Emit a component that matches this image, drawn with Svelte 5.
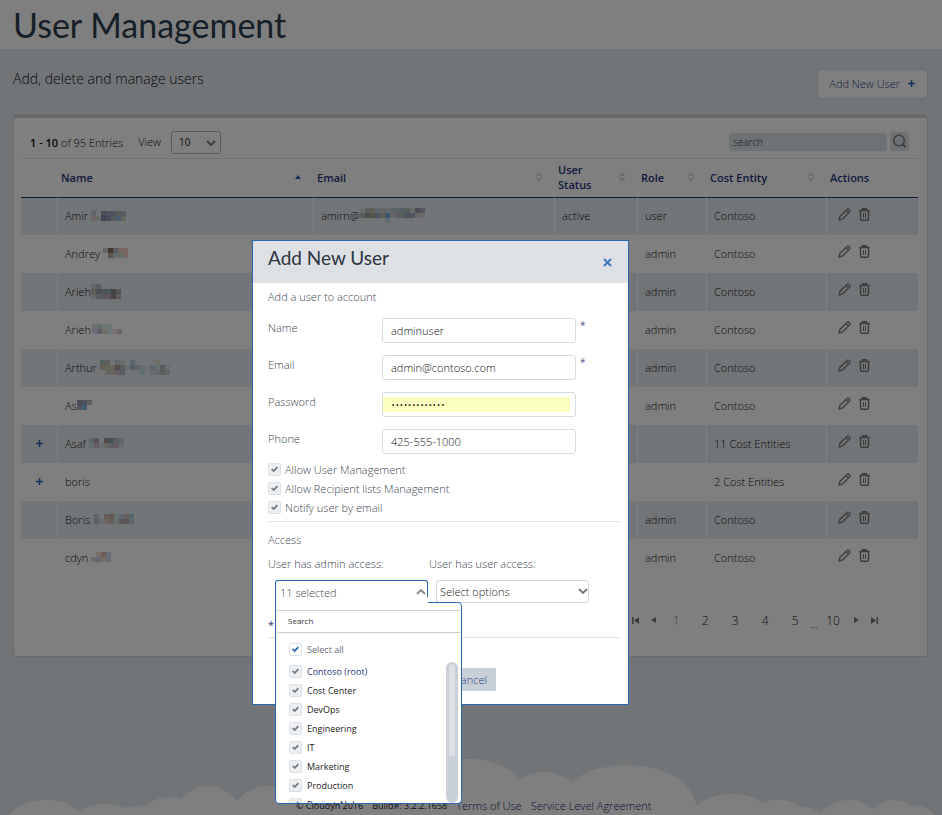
<script>
  // Redacted names are drawn as small grids of 5px blocks; '' leaves a block empty.
  const users = [
    { name: 'Amir', mask: [['bcd', '', '99a', '9ab', '9ab', 'abb', 'abb'], ['dcc', 'cdc', '88a', '89b', 'abb', '9bd', 'ccb']], pad: 3, email: 'amirn@', status: 'active', role: 'user', entity: 'Contoso' },
    { name: 'Andrey', mask: [['ccc', '865', 'abb', 'ecb', 'ecb'], ['', 'ba9', 'cdd', 'cdd', 'ecb']], pad: 3, role: 'admin', entity: 'Contoso' },
    { name: 'Arieh', mask: [['ccc', 'abc', '', '', '', ''], ['bba', '99a', '9aa', '9aa', '888', 'aaa'], ['ccc', 'abb', 'aab', 'bab', '988', 'bbb']], pad: 0, role: 'admin', entity: 'Contoso' },
    { name: 'Arieh', mask: [['dde', 'cdd', 'dee', 'dee', '', ''], ['dde', 'bbc', 'ddc', 'dee', 'edd', 'ccc']], pad: 1, role: 'admin', entity: 'Contoso' },
    { name: 'Arthur', mask: [['abb', 'bbb', '', 'ccc', 'cdd', '', 'bcd', '', '', '', '', 'ddc', '', ''], ['cba', 'ccb', 'ccb', 'a99', 'bbb', 'cdd', 'abc', 'bcd', 'cdd', 'dde', 'bcd', 'cdd', 'abb', 'cdd'], ['', 'ccb', 'ccb', 'cbc', 'bbc', '', '', '', 'bdd', '', 'cdd', 'ccd', 'bbb', 'bcc']], pad: 3, role: 'admin', entity: 'Contoso' },
    { name: 'As', mask: [['99a', '9ab', 'bbc'], ['aab', '7bd', '']], pad: 0, role: 'admin', entity: 'Contoso' },
    { name: 'Asaf', more: true, mask: [['bcc', 'aaa', '', '998', '8ab', 'bbc', 'bcc'], ['cdd', 'cbc', 'dde', 'ccc', 'bbc', 'cbc', 'cdd']], pad: 3, role: '', entity: '11 Cost Entities' },
    { name: 'boris', more: true, mask: [], pad: 0, role: '', entity: '2 Cost Entities' },
    { name: 'Boris', mask: [['bcc', '', 'cbb', 'caa', 'cdd', 'bcd', 'cbb', 'acd'], ['bbc', 'cdd', 'dcb', 'cbb', 'cdd', 'aaa', 'baa', 'bcd']], pad: 4, role: 'admin', entity: 'Contoso' },
    { name: 'cdyn', mask: [['', 'edc', 'dba', 'cde'], ['ddc', 'ccd', 'edc', 'cde']], pad: 3, role: 'admin', entity: 'Contoso' }
  ];
  const emailMask = [
    ['cdd', 'bbb', 'bba', 'bcd', 'ccc', 'ccd', 'bcc', 'bcc', 'abc', 'abb', 'cdd', '99a', 'aab'],
    ['bbb', '998', 'aa9', '9ac', 'bba', '7ad', 'ccc', 'bbc', 'abb', '9ab', '9ab', 'ccc', 'dcc'],
    ['', '', '', '', '', 'bdd', '', '', '', '', '', '', '']
  ];

  const columns = [
    { label: '', key: 'more' },
    { label: 'Name', key: 'name', sort: 'up' },
    { label: 'Email', key: 'email', sort: 'both' },
    { label: 'User Status', key: 'status', sort: 'both' },
    { label: 'Role', key: 'role', sort: 'both' },
    { label: 'Cost Entity', key: 'entity', sort: 'both' },
    { label: 'Actions', key: 'actions' }
  ];

  const fields = [
    { id: 'name', label: 'Name', type: 'text', value: 'adminuser', required: true },
    { id: 'email', label: 'Email', type: 'text', value: 'admin@contoso.com', required: true },
    { id: 'password', label: 'Password', type: 'password', value: 'administrator' },
    { id: 'phone', label: 'Phone', type: 'text', value: '425-555-1000' }
  ];
  const permissions = ['Allow User Management', 'Allow Recipient lists Management', 'Notify user by email'];
  const entities = ['Contoso (root)', 'Cost Center', 'DevOps', 'Engineering', 'IT', 'Marketing', 'Production', 'Project Alpha'];
</script>

{#snippet mosaic(rows)}
  {#if rows.length}
    <svg class="mosaic" width={rows[0].length * 5} height={rows.length * 5} aria-hidden="true" shape-rendering="crispEdges">
      {#each rows as row, y}
        {#each row as c, x}
          {#if c}<rect x={x * 5} y={y * 5} width="5" height="5" fill={'#' + c} />{/if}
        {/each}
      {/each}
    </svg>
  {/if}
{/snippet}

{#snippet plus()}
  <svg width="9" height="9" viewBox="0 0 9 9" aria-hidden="true"><path d="M4.5 1v7M1 4.500h7" stroke="#2a66b0" stroke-width="1.6" /></svg>
{/snippet}

<div class="page">
  <header class="title-bar"><h1>User Management</h1></header>

  <main>
    <div class="intro">
      <p>Add, delete and manage users</p>
      <button class="add">Add New User {@render plus()}</button>
    </div>

    <section class="card">
      <div class="toolbar">
        <span><b>1 - 10</b> of 95 Entries</span>
        <label class="view" for="view">View</label>
        <span class="pick small">
          <select id="view"><option>10</option></select>
          <svg width="10" height="6" viewBox="0 0 10 6" aria-hidden="true"><path d="M1 1l4 4 4-4" fill="none" stroke="#777" stroke-width="1.8" /></svg>
        </span>
        <div class="find">
          <input type="text" placeholder="search" aria-label="search" />
          <button aria-label="Search">
            <svg width="15" height="15" viewBox="0 0 15 15" fill="none" stroke="#858585" aria-hidden="true"><circle cx="7" cy="6.5" r="5.300" stroke-width="1.7" /><path d="M10.5 10l3 3.2" stroke-width="2.2" /></svg>
          </button>
        </div>
      </div>

      <table>
        <colgroup>{#each columns as c}<col class={c.key} />{/each}</colgroup>
        <thead>
          <tr>
            {#each columns as c}
              <th>
                <div class="head">
                  <span>{c.label}</span>
                  {#if c.sort === 'up'}
                    <svg width="6" height="4" viewBox="0 0 6 4" aria-hidden="true"><path d="M3 0l3 4H0z" fill="#2a66b0" /></svg>
                  {:else if c.sort}
                    <svg width="6" height="8" viewBox="0 0 6 8" fill="none" stroke="#999" aria-hidden="true"><path d="M.5 3L3 .7 5.500 3M.5 5L3 7.300 5.500 5" /></svg>
                  {/if}
                </div>
              </th>
            {/each}
          </tr>
        </thead>
        <tbody>
          {#each users as u}
            <tr>
              <td class="more">{#if u.more}<button aria-label="Expand">{@render plus()}</button>{/if}</td>
              <td><span class="who" style:gap="{u.pad}px">{u.name}{@render mosaic(u.mask)}</span></td>
              <td>{#if u.email}<span class="who">{u.email}{@render mosaic(emailMask)}</span>{/if}</td>
              <td>{u.status ?? ''}</td>
              <td>{u.role}</td>
              <td>{u.entity}</td>
              <td class="actions">
                <button aria-label="Edit">
                  <svg width="13" height="13" viewBox="0 0 13 13" fill="none" stroke="#808080" stroke-width="1.5" stroke-linejoin="round" aria-hidden="true"><path d="M1 12l.9-3.600L9 1.500c.6-.6 1.300-.6 1.900 0l.6.6c.6.6.6 1.300 0 1.900L4.500 11zM8 2.600L10.500 5" /></svg>
                </button>
                <button aria-label="Delete">
                  <svg width="11" height="13" viewBox="0 0 11 13" fill="none" stroke="#777" stroke-width="1.400" aria-hidden="true"><path d="M.3 2.500h10.400M3.500 2.300V.8h4v1.500M1.500 2.700v8q0 1.500 1.200 1.500h5.600q1.200 0 1.200-1.500v-8" /><path d="M4.500 5v5M6.500 5v5" stroke-width="1" /></svg>
                </button>
              </td>
            </tr>
          {/each}
        </tbody>
      </table>

      <nav class="pager" aria-label="Pages">
        <button aria-label="First page"><svg width="7" height="7" aria-hidden="true"><path d="M0 0h1.500v7H0zM7 0v7L2 3.500z" /></svg></button>
        <button aria-label="Previous page"><svg width="5" height="6" aria-hidden="true"><path d="M5 0v6L0 3z" /></svg></button>
        <a class="now" href="#1">1</a><a href="#2">2</a><a href="#3">3</a><a href="#4">4</a><a href="#5">5</a>
        <span class="dots">...</span>
        <a href="#10">10</a>
        <button aria-label="Next page"><svg width="5" height="6" aria-hidden="true"><path d="M0 0v6l5-3z" /></svg></button>
        <button aria-label="Last page"><svg width="7" height="7" aria-hidden="true"><path d="M5.500 0H7v7H5.500zM0 0v7l5-3.500z" /></svg></button>
      </nav>
    </section>
  </main>

  <footer>
    <svg class="clouds" viewBox="0 0 942 60" preserveAspectRatio="xMidYMax slice" aria-hidden="true">
      <path fill="#fff" d="M9 60Q22 45 46 45Q66 45 79 56Q90 49 104 49Q116 49 124 53Q136 50 147 51Q156 42 168 42Q176 42 181 44Q193 31 208 31Q224 31 237 46Q250 31 268 31Q300 31 330 36Q380 4 470 4Q500 4 520 24Q530 17 544 17Q558 17 571 27Q594 10 627 10C665 10 694 28 696 51Q710 39 732 39Q752 39 762 48Q784 40 799 52Q812 51 821 58Q833 45 850 45Q864 45 873 55Q882 45 893 45Q905 45 911 51Q926 49 934 60z" />
    </svg>
    <small>© Cloudyn 2016</small>
    <small>Build#: 3.2.2.1658</small>
    <a href="#terms">Terms of Use</a>
    <a href="#sla">Service Level Agreement</a>
  </footer>
  <div class="shade"></div>

  <form class="modal" role="dialog" aria-labelledby="dialog-title">
    <div class="modal-head">
      <h2 id="dialog-title">Add New User</h2>
      <button type="button" aria-label="Close"><svg width="9" height="9" viewBox="0 0 9 9" aria-hidden="true"><path d="M1 1l7 7M8 1L1 8" stroke="#3f78bd" stroke-width="2" /></svg></button>
    </div>
    <div class="modal-body">
      <p>Add a user to account</p>
      <div class="fields">
        {#each fields as f}
          <div class="field">
            <label for={f.id}>{f.label}</label>
            <input id={f.id} type={f.type} value={f.value} />
            {#if f.required}<i>*</i>{/if}
          </div>
        {/each}
      </div>
      {#each permissions as p}
        <label class="tick"><input type="checkbox" checked />{p}</label>
      {/each}
      <hr />
      <p class="access">Access</p>
      <div class="pair">
        <div>
          <label for="admin-access">User has admin access:</label>
          <button type="button" class="open" id="admin-access">
            11 selected
            <svg width="10" height="6" viewBox="0 0 10 6" aria-hidden="true"><path d="M1 5l4-4 4 4" fill="none" stroke="#888" stroke-width="1.800" /></svg>
          </button>
        </div>
        <div>
          <label for="user-access">User has user access:</label>
          <span class="pick wide">
            <select id="user-access"><option>Select options</option></select>
            <svg width="10" height="6" viewBox="0 0 10 6" aria-hidden="true"><path d="M1 1l4 4 4-4" fill="none" stroke="#777" stroke-width="1.800" /></svg>
          </span>
        </div>
      </div>
      <p class="star">*</p>
      <hr />
      <div class="buttons"><button type="button">Cancel</button></div>
    </div>

    <div class="menu">
      <input class="filter" type="text" placeholder="Search" aria-label="Search entities" />
      <label class="tick all"><input type="checkbox" checked />Select all</label>
      <div class="scroll">
        <div class="items">
          {#each entities as e, i}
            <label class="tick" class:root={i === 0}><input type="checkbox" checked />{e}</label>
          {/each}
        </div>
        <div class="track"><div class="thumb"></div></div>
      </div>
    </div>
  </form>
</div>

<style>
  :global(body) { margin: 0; }
  * { box-sizing: border-box; }
  button, input, select { font: inherit; color: inherit; margin: 0; }
  button { background: none; border: 0; padding: 0; }
  a { color: inherit; text-decoration: none; }
  svg { display: block; flex: none; }
  h1, h2, p { margin: 0; font-weight: 300; }

  .page {
    position: relative; display: flex; flex-direction: column;
    height: 100vh; min-height: 815px; overflow: hidden;
    background: #e5ebef; color: #111;
    font: 300 11px/15px "Open Sans", "Noto Sans", sans-serif;
  }
  .title-bar { height: 49px; padding: 0 13px; background: #fff; }
  h1 { font: 34px/50px Lato, "Open Sans", sans-serif; color: #2c3e50; }
  main { padding: 20px 14px 0 13px; }
  .intro { display: flex; justify-content: space-between; height: 45px; }
  .intro p { font-size: 14px; line-height: 20px; }
  .add {
    display: flex; align-items: center; gap: 7px; height: 30px; padding: 0 11px 2px;
    background: #fff; border: 1px solid #d4d9dd; border-radius: 3px; color: #1f3f8a;
  }

  .card {
    height: 543px; padding: 0 9px 0 7px; background: #fff;
    border: 1px solid #d4d4d4; border-top: 4px solid #d2d2d2; border-radius: 4px;
  }
  .toolbar { display: flex; align-items: center; height: 41px; padding: 8px 9px 0; border-bottom: 1px solid #e2e2e2; }
  .view { margin: 0 10px 2px 15px; }
  .pick { position: relative; display: block; }
  .pick select {
    width: 100%; appearance: none; background: #fff;
    border: 1px solid #d3d9df; border-radius: 3px;
  }
  .pick svg { position: absolute; right: 5px; top: 9px; pointer-events: none; }
  .small select { width: 50px; height: 23px; padding: 0 7px; border-color: #b4b4b4; font-size: 10px; font-weight: 400; }
  .find { display: flex; align-items: center; gap: 3px; margin-left: auto; padding-bottom: 1px; }
  .find input { width: 158px; height: 18px; padding: 0 4px; background: #dde5ea; border: 0; border-radius: 3px; font-size: 10px; }
  .find button { display: grid; place-items: center; width: 19px; height: 19px; background: #dde5ea; border-radius: 3px; }
  ::placeholder { color: #333; opacity: 1; }

  table { width: 100%; table-layout: fixed; border-collapse: separate; border-spacing: 0; }
  col.more { width: 36px; }
  col.name { width: 256px; }
  col.status { width: 83px; }
  col.role { width: 69px; }
  col.entity { width: 120px; }
  col.actions { width: 92px; }
  b, th { font-weight: 600; }
  th { height: 38px; padding: 0 12px 2px 4px; text-align: left; color: #1f3480; }
  .head { display: flex; align-items: center; justify-content: space-between; gap: 10px; }
  td { height: 38px; padding: 0 0 2px 7px; border-left: 1px solid #fff; white-space: nowrap; }
  td.more { border-left: 0; }
  tbody tr:first-child td { border-top: 1px solid #1f3480; }
  tbody tr:nth-child(odd) td { background: #e5ebef; }
  .more button { display: block; margin-left: 7px; }
  .who { display: flex; align-items: center; height: 15px; }
  .actions button { display: inline-block; margin: 0 1px 0 4px; }

  .pager { display: flex; align-items: center; justify-content: flex-end; height: 86px; padding-right: 40px; }
  .pager svg { fill: #777; }
  .pager button { padding: 0 6px; }
  .pager button:last-child { padding-right: 0; }
  .pager a { width: 30px; text-align: center; font-size: 12px; }
  .pager .now { width: 28px; color: #888; }
  .dots { padding-top: 6px; }

  footer { position: relative; display: flex; align-items: flex-end; gap: 9px; height: 60px; margin-top: auto; padding-left: 296px; color: #14246c; line-height: 18px; }
  footer > * { position: relative; }
  footer small { font-size: 9px; font-weight: 400; color: #222; }
  footer .clouds { position: absolute; left: 0; bottom: 0; width: 100%; height: 60px; }
  .shade { position: absolute; inset: 0; background: rgba(0, 0, 0, .5); }

  .modal {
    position: absolute; left: 252px; top: 240px; width: 377px; min-height: 465px;
    background: #fff; border: 1px solid #2a66b0; color: #40464e;
  }
  .modal-head { display: flex; justify-content: space-between; height: 42px; padding: 0 16px 0 15px; background: #dde1e6; }
  h2 { font: 19px/34px Lato, "Open Sans", sans-serif; color: #2c3440; }
  .modal-body { padding: 6px 8px 12px 15px; }
  .fields { display: grid; gap: 12px; padding: 14px 0 6px; }
  .field { display: flex; height: 25px; }
  .field label { width: 114px; padding-top: 2px; }
  .field input { width: 194px; height: 25px; padding: 0 8px; border: 1px solid #d6dbe0; border-radius: 3px; background: #fff; color: #111; }
  .field input[type='password'] { background: linear-gradient(#faffbd, #faffbd) 0 4px / 187px 15px no-repeat #fff; }
  .field i { margin-left: 4px; font-style: normal; font-size: 10px; font-weight: 400; color: #4a5a85; }
  .tick { display: flex; align-items: center; gap: 4px; height: 19px; }
  .tick input {
    position: relative; flex: none; width: 13px; height: 13px; appearance: none;
    border: 1px solid #dde1e6; border-radius: 2px; background: #edf0f3; color: #747b82;
  }
  .tick input::before {
    content: ''; position: absolute; left: 2px; top: 2px; width: 7px; height: 7px; background: currentColor;
    clip-path: polygon(0 50%, 18% 34%, 38% 54%, 82% 8%, 100% 24%, 40% 90%);
  }
  hr { margin: 4px 0 0; border: 0; border-top: 1px solid #dde1e6; }
  .access { margin: 10px 0 9px; }
  .pair { display: flex; }
  .pair > div { width: 161px; }
  .pair label { display: block; margin-bottom: 9px; }
  .open {
    display: flex; align-items: center; justify-content: space-between; width: 153px; height: 23px; margin-left: 7px;
    padding: 0 1px 0 4px; border: 1px solid #2a66b0; border-bottom: 0; border-radius: 3px 3px 0 0;
  }
  .wide { width: 153px; margin-left: 7px; }
  .wide select { height: 23px; padding: 0 3px; color: #222; }
  .wide svg { right: 1px; top: 8px; }
  .star { margin: 14px 0 5px; color: #1f3480; font-weight: 400; }
  .buttons { display: flex; padding: 30px 0 0 177px; }
  .buttons button { height: 23px; width: 51px; background: #c9d0d8; color: #1f3f8a; }

  .menu {
    position: absolute; left: 22px; top: 361px; width: 187px; height: 202px;
    display: flex; flex-direction: column;
    background: #fff; border: 1px solid #2a66b0; border-radius: 0 4px 4px 4px; font-size: 9px; font-weight: 400;
  }
  .menu::before { content: ''; position: absolute; left: 0; top: -6px; width: 152px; height: 8px; background: #fff; }
  .filter {
    flex: none; height: 23px; margin: 7px 1px 0; padding: 0 11px 2px; border: solid #ccc; border-width: 1px 0; border-radius: 0;
    outline: 0; font-size: 8px; background: none;
  }
  .menu .tick input { margin-right: 1px; }
  .menu .all { flex: none; height: 13px; margin: 10px 0 6px; padding-left: 13px; color: #6a7078; }
  .all input { background: #fff; color: #2a66b0; }
  .scroll { flex: 1; min-height: 0; display: flex; justify-content: space-between; padding-right: 3px; }
  .items { flex: 1; overflow: hidden; padding-left: 13px; color: #222; }
  .items .root { color: #1f3480; }
  .track { width: 12px; padding: 2px 3px; background: #c9d0d8; border-radius: 6px; }
  .thumb { height: 93px; background: #dde1e6; border-radius: 3px; }
</style>
